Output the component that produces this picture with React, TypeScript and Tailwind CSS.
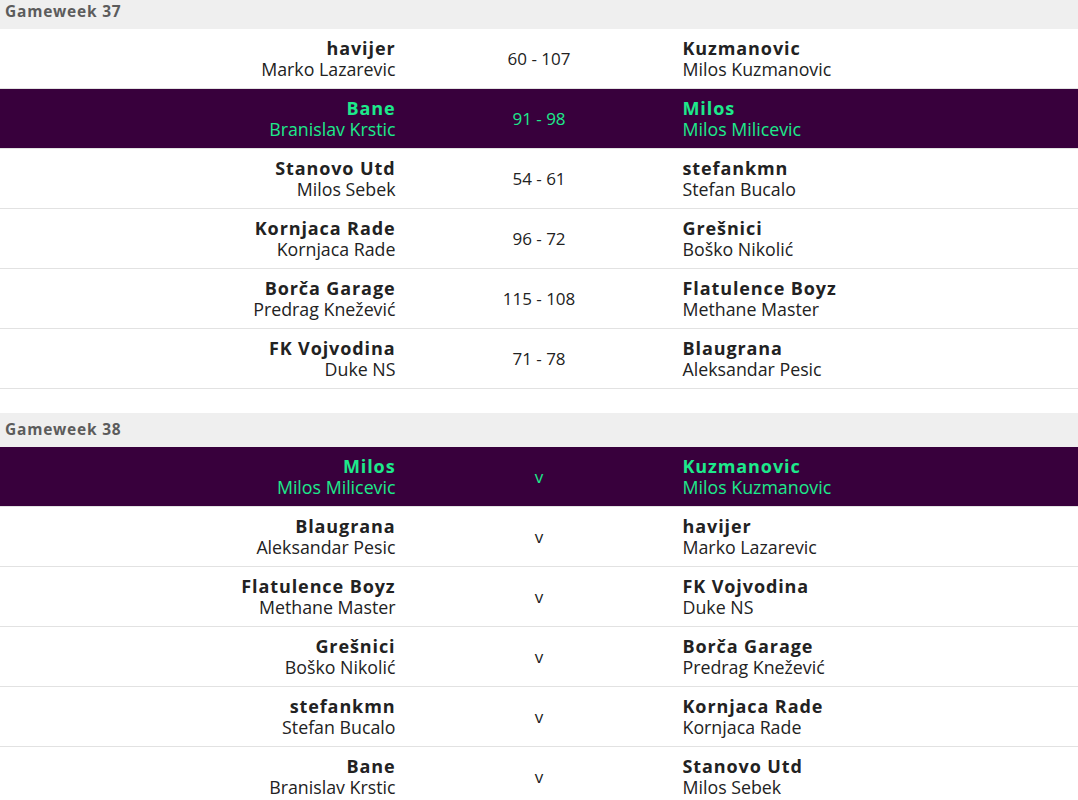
import React from 'react'

type Side = { team: string; manager: string }
type Fixture = { home: Side; away: Side; score?: string; mine?: boolean }

const gw37: Fixture[] = [
  { home: { team: 'havijer', manager: 'Marko Lazarevic' }, away: { team: 'Kuzmanovic', manager: 'Milos Kuzmanovic' }, score: '60 - 107' },
  { home: { team: 'Bane', manager: 'Branislav Krstic' }, away: { team: 'Milos', manager: 'Milos Milicevic' }, score: '91 - 98', mine: true },
  { home: { team: 'Stanovo Utd', manager: 'Milos Sebek' }, away: { team: 'stefankmn', manager: 'Stefan Bucalo' }, score: '54 - 61' },
  { home: { team: 'Kornjaca Rade', manager: 'Kornjaca Rade' }, away: { team: 'Grešnici', manager: 'Boško Nikolić' }, score: '96 - 72' },
  { home: { team: 'Borča Garage', manager: 'Predrag Knežević' }, away: { team: 'Flatulence Boyz', manager: 'Methane Master' }, score: '115 - 108' },
  { home: { team: 'FK Vojvodina', manager: 'Duke NS' }, away: { team: 'Blaugrana', manager: 'Aleksandar Pesic' }, score: '71 - 78' },
]

const gw38: Fixture[] = [
  { home: { team: 'Milos', manager: 'Milos Milicevic' }, away: { team: 'Kuzmanovic', manager: 'Milos Kuzmanovic' }, mine: true },
  { home: { team: 'Blaugrana', manager: 'Aleksandar Pesic' }, away: { team: 'havijer', manager: 'Marko Lazarevic' } },
  { home: { team: 'Flatulence Boyz', manager: 'Methane Master' }, away: { team: 'FK Vojvodina', manager: 'Duke NS' } },
  { home: { team: 'Grešnici', manager: 'Boško Nikolić' }, away: { team: 'Borča Garage', manager: 'Predrag Knežević' } },
  { home: { team: 'stefankmn', manager: 'Stefan Bucalo' }, away: { team: 'Kornjaca Rade', manager: 'Kornjaca Rade' } },
  { home: { team: 'Bane', manager: 'Branislav Krstic' }, away: { team: 'Stanovo Utd', manager: 'Milos Sebek' } },
]

function Entry({ side, align, mine }: { side: Side; align: 'left' | 'right'; mine?: boolean }) {
  return (
    <div className={`flex-1 flex flex-col ${align === 'right' ? 'items-end text-right' : 'items-start text-left'}`}>
      <span className={`text-[18px] font-bold leading-[21px] tracking-[0.05em] ${mine ? 'text-[#1de98b]' : 'text-[#222]'}`}>{side.team}</span>
      <span className={`text-[17.8px] leading-[21px] ${mine ? 'text-[#1de98b]' : 'text-[#222]'}`}>{side.manager}</span>
    </div>
  )
}

function Row({ f }: { f: Fixture }) {
  return (
    <div className={`flex items-center h-[60px] border-b border-[#e2e2e2] ${f.mine ? 'bg-[#38003c]' : 'bg-white'}`}>
      <Entry side={f.home} align="right" mine={f.mine} />
      <div className={`w-[287px] text-center text-[17px] ${f.mine ? 'text-[#1de98b]' : 'text-[#222]'}`}>
        {f.score ?? 'v'}
      </div>
      <Entry side={f.away} align="left" mine={f.mine} />
    </div>
  )
}

function Gameweek({ title, fixtures }: { title: string; fixtures: Fixture[] }) {
  return (
    <section>
      <div className="h-[34px] bg-[#efefef] flex items-center px-[5px] text-[15.5px] font-bold text-[#5c5c5c] tracking-[0.05em]">
        {title}
      </div>
      {fixtures.map((f, i) => (
        <Row key={i} f={f} />
      ))}
    </section>
  )
}

export default function App() {
  return (
    <div className="w-[1078px] h-[800px] overflow-hidden bg-white" style={{ fontFamily: '"Open Sans", "Noto Sans", sans-serif' }}>
      <div className="-mt-[5px] flex flex-col gap-[24px]">
        <Gameweek title="Gameweek 37" fixtures={gw37} />
        <Gameweek title="Gameweek 38" fixtures={gw38} />
      </div>
    </div>
  )
}
